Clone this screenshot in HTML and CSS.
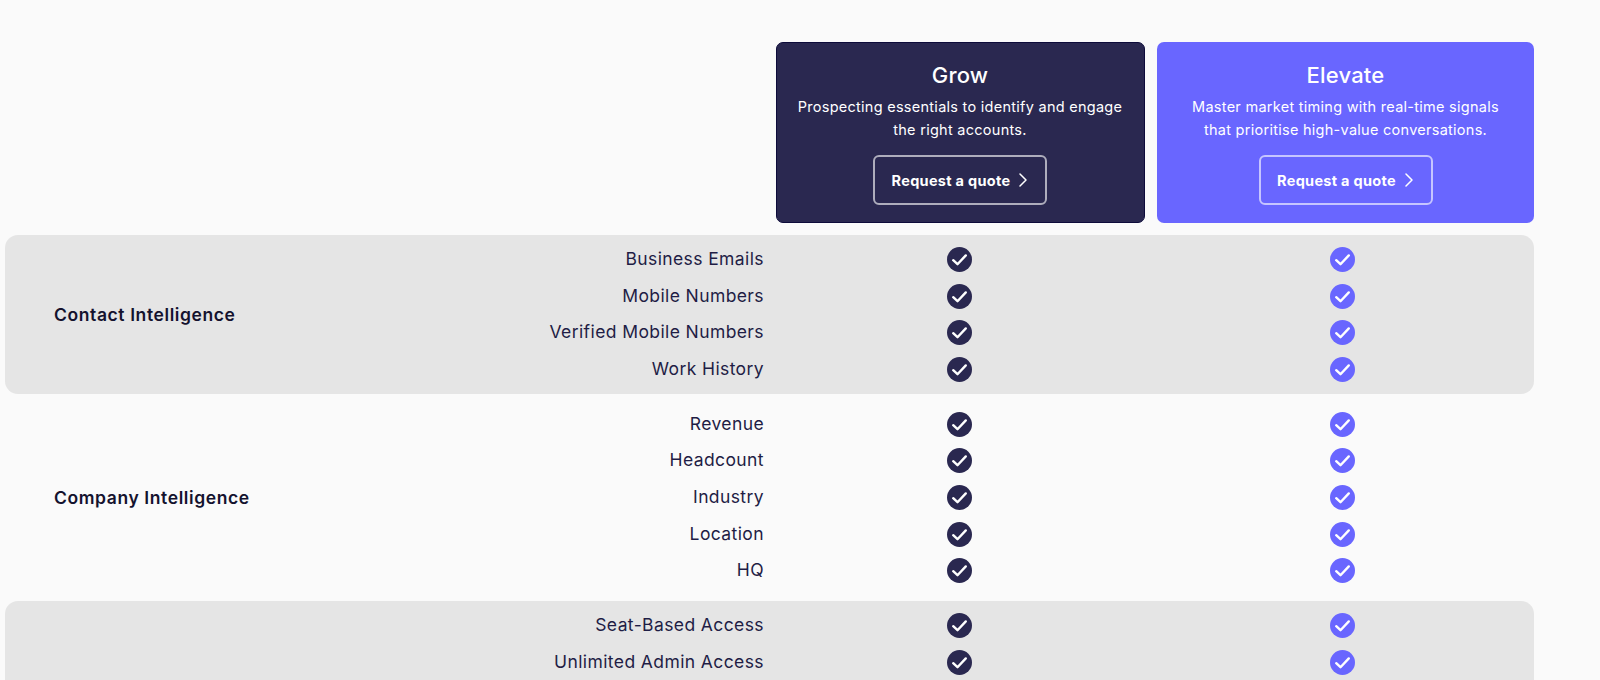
FILE: index.html
```html
<!DOCTYPE html>
<html lang="en">
<head>
<meta charset="utf-8">
<title>Plan comparison</title>
<link rel="stylesheet" href="styles.css">
</head>
<body>
<svg class="sprite" width="0" height="0" aria-hidden="true">
  <symbol id="check" viewBox="0 0 25 25">
    <circle cx="12.5" cy="12.5" r="12.5" fill="currentColor"/>
    <path d="M6.2 13.2l4.3 4 8.3-8.8" fill="none" stroke="#fff" stroke-width="2.4" stroke-linecap="round" stroke-linejoin="round"/>
  </symbol>
  <symbol id="chev" viewBox="0 0 10 14">
    <path d="M2 1l6 6-6 6" fill="none" stroke="currentColor" stroke-width="1.5" stroke-linecap="round" stroke-linejoin="round"/>
  </symbol>
</svg>
<main class="page">
  <header class="plans">
    <section class="card card-grow">
      <h2 class="card-title">Grow</h2>
      <p class="card-desc">Prospecting essentials to identify and engage the right accounts.</p>
      <a class="btn" href="#">Request a quote <svg class="chev"><use href="#chev"/></svg></a>
    </section>
    <section class="card card-elevate">
      <h2 class="card-title">Elevate</h2>
      <p class="card-desc">Master market timing with real-time signals that prioritise high-value conversations.</p>
      <a class="btn" href="#">Request a quote <svg class="chev"><use href="#chev"/></svg></a>
    </section>
  </header>

  <section class="group band">
    <h3 class="group-title">Contact Intelligence</h3>
    <div class="rows">
      <div class="row"><span class="feature">Business Emails</span><span class="cell"><svg class="tick tick-grow"><use href="#check"/></svg></span><span class="cell"><svg class="tick tick-elevate"><use href="#check"/></svg></span></div>
      <div class="row"><span class="feature">Mobile Numbers</span><span class="cell"><svg class="tick tick-grow"><use href="#check"/></svg></span><span class="cell"><svg class="tick tick-elevate"><use href="#check"/></svg></span></div>
      <div class="row"><span class="feature">Verified Mobile Numbers</span><span class="cell"><svg class="tick tick-grow"><use href="#check"/></svg></span><span class="cell"><svg class="tick tick-elevate"><use href="#check"/></svg></span></div>
      <div class="row"><span class="feature">Work History</span><span class="cell"><svg class="tick tick-grow"><use href="#check"/></svg></span><span class="cell"><svg class="tick tick-elevate"><use href="#check"/></svg></span></div>
    </div>
  </section>

  <section class="group">
    <h3 class="group-title">Company Intelligence</h3>
    <div class="rows">
      <div class="row"><span class="feature">Revenue</span><span class="cell"><svg class="tick tick-grow"><use href="#check"/></svg></span><span class="cell"><svg class="tick tick-elevate"><use href="#check"/></svg></span></div>
      <div class="row"><span class="feature">Headcount</span><span class="cell"><svg class="tick tick-grow"><use href="#check"/></svg></span><span class="cell"><svg class="tick tick-elevate"><use href="#check"/></svg></span></div>
      <div class="row"><span class="feature">Industry</span><span class="cell"><svg class="tick tick-grow"><use href="#check"/></svg></span><span class="cell"><svg class="tick tick-elevate"><use href="#check"/></svg></span></div>
      <div class="row"><span class="feature">Location</span><span class="cell"><svg class="tick tick-grow"><use href="#check"/></svg></span><span class="cell"><svg class="tick tick-elevate"><use href="#check"/></svg></span></div>
      <div class="row"><span class="feature">HQ</span><span class="cell"><svg class="tick tick-grow"><use href="#check"/></svg></span><span class="cell"><svg class="tick tick-elevate"><use href="#check"/></svg></span></div>
    </div>
  </section>

  <section class="group band band-cut">
    <div class="group-title"></div>
    <div class="rows">
      <div class="row"><span class="feature">Seat-Based Access</span><span class="cell"><svg class="tick tick-grow"><use href="#check"/></svg></span><span class="cell"><svg class="tick tick-elevate"><use href="#check"/></svg></span></div>
      <div class="row"><span class="feature">Unlimited Admin Access</span><span class="cell"><svg class="tick tick-grow"><use href="#check"/></svg></span><span class="cell"><svg class="tick tick-elevate"><use href="#check"/></svg></span></div>
    </div>
  </section>
</main>
</body>
</html>
```
FILE: styles.css
```css
* { box-sizing: border-box; }
html, body { height: 100%; margin: 0; overflow: hidden; }
body {
  background: #fafafa;
  font-family: Inter, "Liberation Sans", sans-serif;
  color: #1f1d45;
}
.sprite { display: block; height: 0; }
.page {
  width: 1529px;
  margin-left: 5px;
  padding-top: 42px;
  display: flex;
  flex-direction: column;
  gap: 6px;
}
.plans {
  display: grid;
  grid-template-columns: 369px 377px;
  column-gap: 12px;
  justify-content: end;
  margin-bottom: 6px;
}
.card {
  height: 181px;
  border-radius: 7px;
  padding: 19px 6px 0;
  display: flex;
  flex-direction: column;
  align-items: center;
  text-align: center;
  color: #fff;
}
.card-grow { background: #2a2850; border: 1px solid #0d0b3a; padding: 18px 7px 0 6px; }
.card-elevate { background: #6966ff; }
.card-title { margin: 0; font-size: 22px; line-height: 28px; font-weight: 500; letter-spacing: .2px; }
.card-desc { margin: 6px 0 0; font-size: 14.5px; line-height: 23px; font-weight: 400; letter-spacing: .27px; max-width: 335px; }
.btn {
  margin-top: 14px;
  width: 174px;
  height: 50px;
  border: 2px solid rgba(255, 255, 255, .62);
  border-radius: 6px;
  display: flex;
  align-items: center;
  justify-content: center;
  gap: 8px;
  color: #fff;
  font-size: 14.5px;
  font-weight: 700;
  letter-spacing: .3px;
  text-decoration: none;
}
.chev { width: 10px; height: 14px; }
.group { display: flex; align-items: center; padding: 6px 0; border-radius: 13px; }
.band { background: #e5e5e5; }
.band-cut { align-items: flex-start; min-height: 160px; }
.group-title { flex: none; width: 359px; margin: 0; padding-left: 49px; font-size: 17.5px; font-weight: 600; letter-spacing: .6px; color: #14122e; }
.rows { display: flex; flex-direction: column; }
.row {
  height: 36.7px;
  display: grid;
  grid-template-columns: 400px 367px 374px;
  column-gap: 12px;
  align-items: center;
}
.feature { padding-bottom: 2px; text-align: right; font-size: 17.5px; font-weight: 400; letter-spacing: .4px; }
.cell { display: flex; justify-content: center; }
.tick { width: 25px; height: 25px; display: block; }
.tick-grow { color: #2a2850; }
.tick-elevate { color: #6966ff; }
```
